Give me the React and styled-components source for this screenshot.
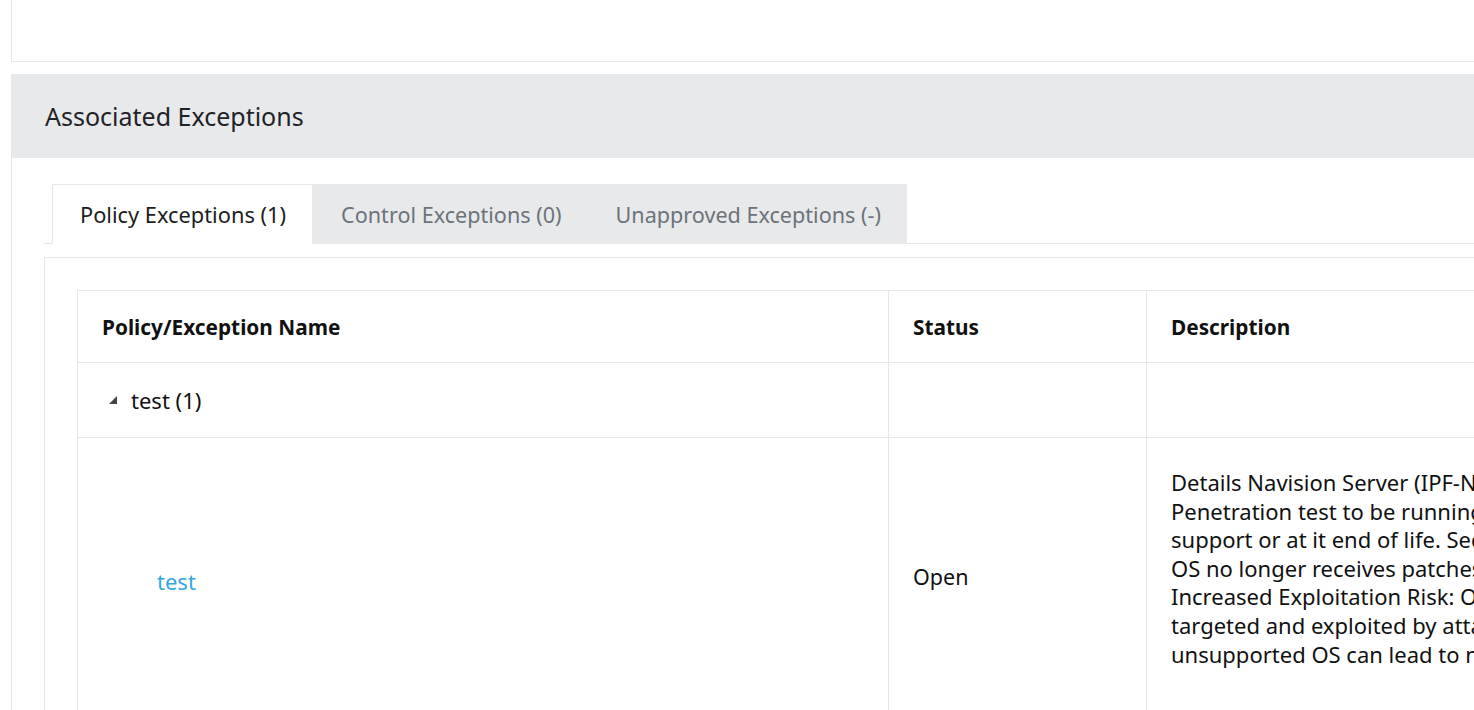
import React from 'react';
import styled, { createGlobalStyle } from 'styled-components';

const GlobalStyle = createGlobalStyle`
  html, body {
    margin: 0;
    padding: 0;
    background: #fff;
    overflow: hidden;
  }
  body {
    font-family: "Noto Sans", Lato, sans-serif;
    color: #212529;
  }
`;

const Page = styled.div`
  width: 2200px;
  padding-left: 11px;
`;

const TopCard = styled.div`
  height: 61px;
  border: 1px solid #e6e7e9;
  border-top: none;
  background: #fff;
`;

const Card = styled.section`
  margin-top: 12px;
  border-left: 1px solid #e6e7e9;
`;

const CardHeader = styled.div`
  height: 84px;
  background: #e8e9eb;
  display: flex;
  align-items: center;
  padding-left: 33px;
  font-size: 25px;
  color: #1f2328;
`;

const CardBody = styled.div`
  padding: 26px 0 0 32px;
`;

const TabBar = styled.div`
  display: flex;
  padding-left: 8px;
  border-bottom: 1px solid #e6e7e9;
`;

const Tab = styled.div`
  height: 60px;
  display: flex;
  align-items: center;
  padding: ${({ $active }) => ($active ? '0 26px 0 27px' : '0 25px 0 27px')};
  font-size: ${({ $active }) => ($active ? '21.8px' : '21.6px')};
  box-sizing: border-box;
  margin-bottom: -1px;
  white-space: nowrap;
  ${({ $active }) =>
    $active
      ? `
    background: #fff;
    color: #1b1e22;
    border: 1px solid #e6e7e9;
    border-bottom: 1px solid #fff;
  `
      : `
    background: #e8e9eb;
    color: #6c737a;
    border: 1px solid #e8e9eb;
  `}
`;

const Panel = styled.div`
  margin-top: 13px;
  border: 1px solid #e6e7e9;
  padding: 32px 0 0 32px;
`;

const Table = styled.table`
  border-collapse: collapse;
  font-size: 21.5px;
  color: #111;
`;

const Th = styled.th`
  text-align: left;
  font-weight: 700;
  font-size: 20.8px;
  height: 72px;
  padding: 0 24px;
  border: 1px solid #e6e7e9;
  box-sizing: border-box;
  width: ${({ $w }) => $w}px;
`;

const Td = styled.td`
  border: 1px solid #e6e7e9;
  padding: 0 24px;
  vertical-align: middle;
  height: ${({ $h }) => ($h ? `${$h}px` : 'auto')};
`;

const GroupLabel = styled.div`
  display: flex;
  align-items: center;
  gap: 13px;
  padding-left: 6px;
  font-size: 22px;
`;

const ExceptionLink = styled.a`
  color: #34a6de;
  text-decoration: none;
  padding: 10px 0 0 55px;
  display: inline-block;
  font-size: 22px;
`;

const Description = styled.div`
  padding: 30px 0 46px;
  line-height: 28.6px;
  font-size: 22px;
`;

const Line = styled.span`
  display: block;
  white-space: nowrap;
`;

const Caret = () => (
  <svg width="10" height="10" viewBox="0 0 10 10">
    <polygon points="9,1 9,9 1,9" fill="#444" />
  </svg>
);

const descLines = [
  'Details Navision Server (IPF-NAV01) is required for the',
  'Penetration test to be running on an OS that is out of',
  'support or at it end of life. Security Risks: Unpatched',
  'OS no longer receives patches, leaving it vulnerable.',
  'Increased Exploitation Risk: Outdated systems are often',
  'targeted and exploited by attackers. Compliance: An',
  'unsupported OS can lead to non-compliance with regulations.',
];

export default function App() {
  return (
    <>
      <GlobalStyle />
      <Page>
        <TopCard />
        <Card>
          <CardHeader>Associated Exceptions</CardHeader>
          <CardBody>
            <TabBar>
              <Tab $active>Policy Exceptions (1)</Tab>
              <Tab>Control Exceptions (0)</Tab>
              <Tab>Unapproved Exceptions (-)</Tab>
            </TabBar>
            <Panel>
              <Table>
                <thead>
                  <tr>
                    <Th $w={811}>Policy/Exception Name</Th>
                    <Th $w={258}>Status</Th>
                    <Th $w={700}>Description</Th>
                  </tr>
                </thead>
                <tbody>
                  <tr>
                    <Td $h={74}>
                      <GroupLabel>
                        <Caret />
                        test (1)
                      </GroupLabel>
                    </Td>
                    <Td />
                    <Td />
                  </tr>
                  <tr>
                    <Td>
                      <ExceptionLink href="#">test</ExceptionLink>
                    </Td>
                    <Td>Open</Td>
                    <Td>
                      <Description>
                        {descLines.map((l) => (
                          <Line key={l}>{l}</Line>
                        ))}
                      </Description>
                    </Td>
                  </tr>
                </tbody>
              </Table>
            </Panel>
          </CardBody>
        </Card>
      </Page>
    </>
  );
}
